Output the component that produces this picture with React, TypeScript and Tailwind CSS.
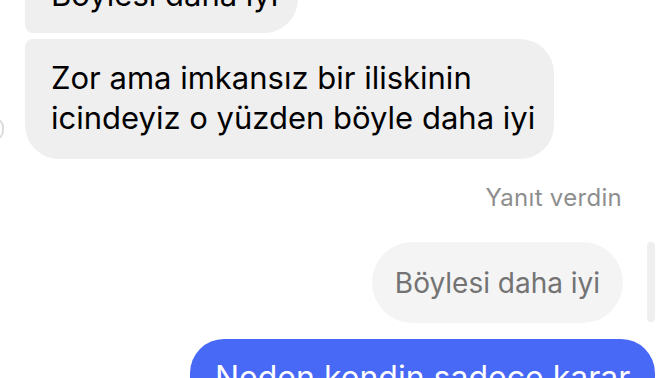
import React from "react";

export default function App() {
  return (
    <div className="w-[672px] h-[378px] overflow-hidden bg-white relative font-['Inter',sans-serif] antialiased">
      {/* tiny avatar edge */}
      <div className="absolute left-[-14px] top-[118px] w-[18px] h-[22px] rounded-full border-2 border-[#dcdcdc]" />
      <div className="flex flex-col">
        <div className="self-start ml-[25px] mt-[-35px] w-[273px] rounded-[34px] rounded-bl-[8px] bg-[#efefef] pl-[26px] pt-[10px] pb-[18px] text-[31px] leading-[40px] text-black whitespace-nowrap">
          Böylesi daha iyi
        </div>
        <div className="self-start ml-[25px] mt-[6px] w-[529px] h-[120px] rounded-[34px] rounded-tl-[8px] bg-[#efefef] pl-[26px] pt-[19px] text-[31px] leading-[40px] text-black whitespace-nowrap">
          Zor ama imkansız bir iliskinin
          <br />
          icindeyiz o yüzden böyle daha iyi
        </div>
        <div className="self-end mr-[50px] mt-[24px] text-[24px] leading-[30px] text-[#8e8e8e] tracking-[0.3px]">
          Yanıt verdin
        </div>
        <div className="self-end mr-[17px] mt-[29px] flex items-stretch gap-[24px]">
          <div className="w-[251px] h-[81px] rounded-full bg-[#f4f4f4] flex items-center justify-center text-[28px] text-[#737373] whitespace-nowrap">
            Böylesi daha iyi
          </div>
          <div className="w-[8px] h-[80px] rounded-full bg-[#efefef]" />
        </div>
        <div className="self-end mr-[17px] mt-[16px] w-[465px] h-[120px] rounded-[34px] bg-[#4769f5] pl-[25px] pt-[17px] text-[32px] leading-[44px] text-white whitespace-nowrap">
          Neden kendin sadece  karar
        </div>
      </div>
    </div>
  );
}
